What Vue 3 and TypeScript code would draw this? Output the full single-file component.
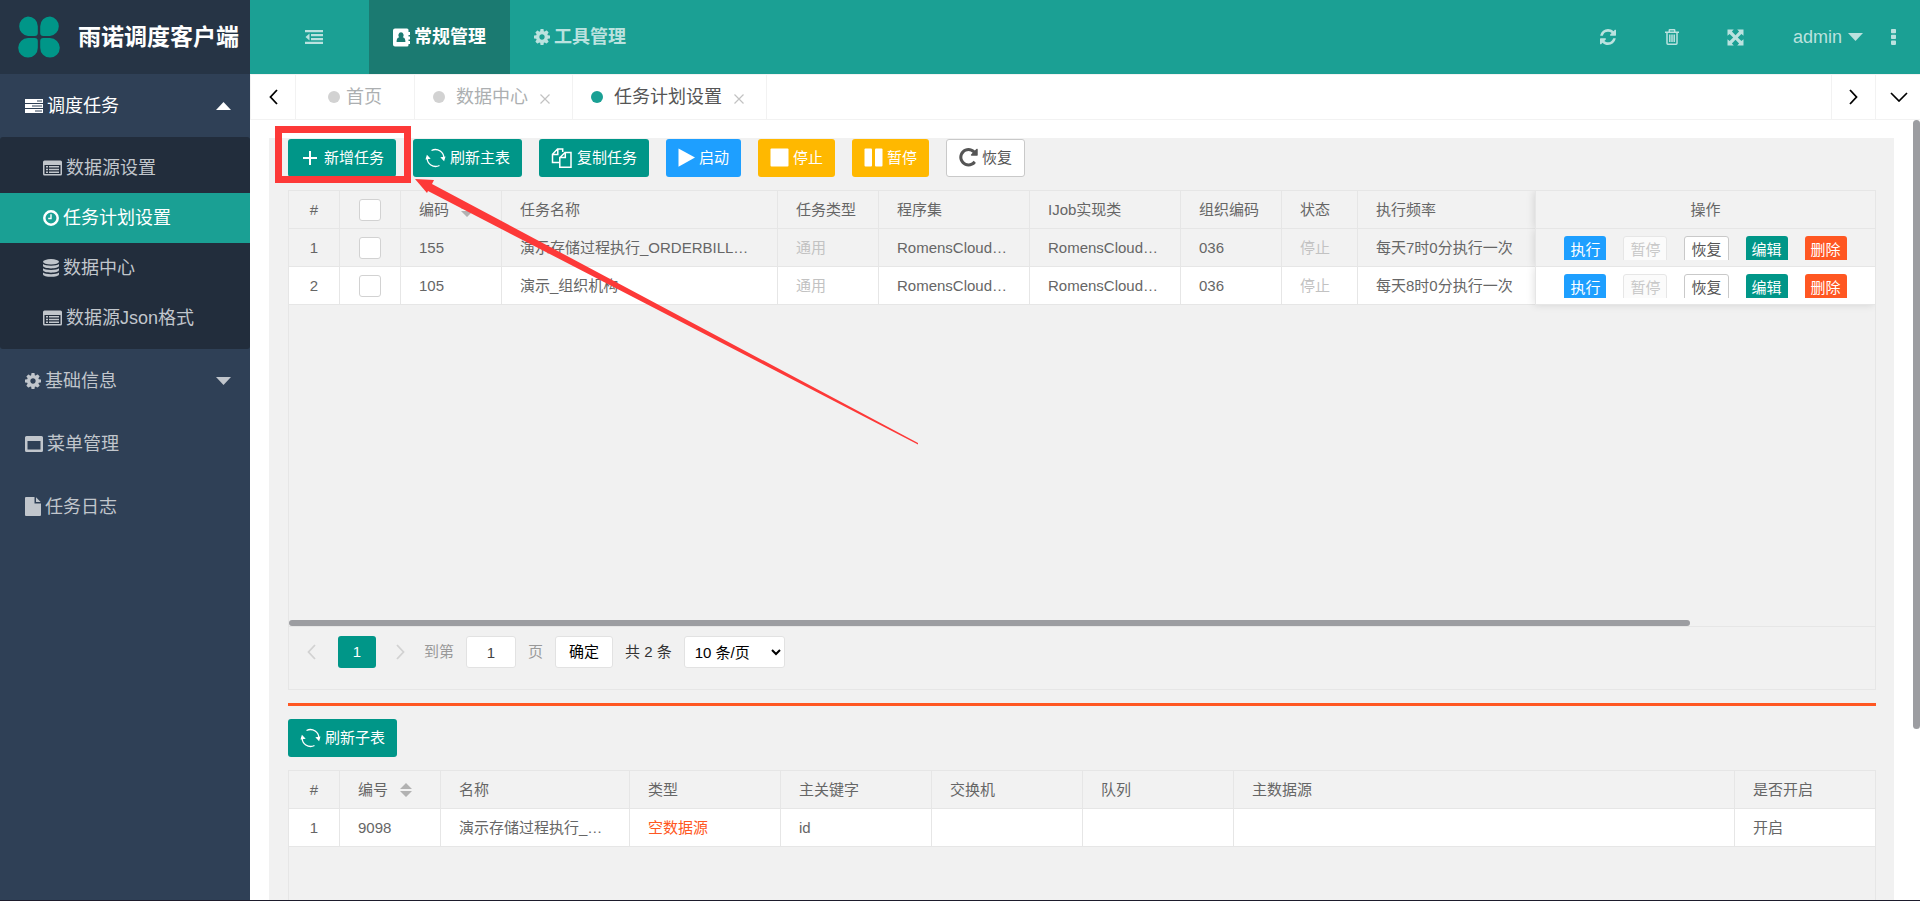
<script setup lang="ts">
import { h, ref } from 'vue'

interface Glyph { box: string; w: number; h: number; body: string }

const cog = '<path d="M1152 896q0-106-75-181t-181-75-181 75-75 181 75 181 181 75 181-75 75-181zm512-109v222q0 12-8 23t-20 13l-185 28q-19 54-39 91 35 50 107 138 10 12 10 25t-9 23q-27 37-99 108t-94 71q-12 0-26-9l-138-108q-44 23-91 38-16 136-29 186-7 28-36 28h-222q-14 0-24.5-8.5t-11.5-21.5l-28-184q-49-16-90-37l-141 107q-10 9-25 9-14 0-25-11-126-114-165-168-7-10-7-23 0-12 8-23 15-21 51-66.5t54-70.5q-27-50-41-99l-183-27q-13-2-21-12.5t-8-23.5v-222q0-12 8-23t19-13l186-28q14-46 39-92-40-57-107-138-10-12-10-24 0-10 9-23 26-36 98.5-107.5t94.5-71.5q13 0 26 10l138 107q44-23 91-38 16-136 29-186 7-28 36-28h222q14 0 24.5 8.5t11.5 21.5l28 184q49 16 90 37l142-107q9-9 24-9 13 0 25 10 129 119 165 170 7 8 7 22 0 12-8 23-15 21-51 66.5t-54 70.5q26 50 41 98l183 28q13 2 21 12.5t8 23.5z"/>'
const refreshArrows = '<path d="M1639 1056q0 5-1 7-64 268-268 434.5t-478 166.5q-146 0-282.5-55t-243.5-157l-129 129q-19 19-45 19t-45-19-19-45v-448q0-26 19-45t45-19h448q26 0 45 19t19 45-19 45l-137 137q71 66 161 102t187 36q134 0 250-65t186-179q11-17 53-117 8-23 30-23h192q13 0 22.5 9.5t9.5 22.5zm25-800v448q0 26-19 45t-45 19h-448q-26 0-45-19t-19-45 19-45l138-138q-148-137-349-137-134 0-250 65t-186 179q-11 17-53 117-8 23-30 23h-199q-13 0-22.5-9.5t-9.5-22.5v-7q65-268 270-434.5t480-166.5q146 0 284 55.5t245 156.5l130-129q19-19 45-19t45 19 19 45z"/>'
const repeatArrow = '<path d="M1664 256v448q0 26-19 45t-45 19h-448q-42 0-59-40-17-39 14-69l138-138q-148-137-349-137-104 0-198.5 40.5t-163.5 109.5-109.5 163.5-40.5 198.5 40.5 198.5 109.5 163.5 163.5 109.5 198.5 40.5q119 0 225-52t179-147q7-10 23-12 15 0 25 9l137 138q9 8 9.5 20.5t-7.5 22.5q-109 132-264 204.5t-327 72.5q-156 0-298-61t-245-164-164-245-61-298 61-298 164-245 245-164 298-61q147 0 284.5 55.5t244.5 156.5l130-129q29-31 70-14 39 17 39 59z"/>'

const glyphs: Record<string, Glyph> = {
  clover: { box: '0 0 42 42', w: 42, h: 42, body: '<path d="M10 0.5a9.8 9.8 0 0 1 9.8 9.8V17a3 3 0 0 1-3 3H10A9.8 9.8 0 0 1 10 .5zM32 .5A9.8 9.8 0 0 1 32 20h-6.800a3 3 0 0 1-3-3v-6.700A9.800 9.800 0 0 1 32 .5zM10 22h6.800a3 3 0 0 1 3 3v6.700A9.800 9.800 0 1 1 10 22zM25.200 22H32a9.800 9.800 0 1 1-9.800 9.700V25a3 3 0 0 1 3-3z"/>' },
  server: { box: '0 0 18 16', w: 18, h: 16, body: '<path fill-rule="evenodd" d="M0 1h18v4H0zM12 2.500v1h5v-1zM0 6h18v4H0zM7 7.500v1h10v-1zM0 11h18v4H0zM10 12.500v1h7v-1z"/>' },
  list: { box: '0 0 19 16', w: 19, h: 16, body: '<path fill-rule="evenodd" d="M1.500.5h16A1.500 1.500 0 0 1 19 2v12a1.500 1.500 0 0 1-1.500 1.500h-16A1.500 1.500 0 0 1 0 14V2A1.500 1.500 0 0 1 1.500.5zM1.500 5v9h16V5zM3 6h2v1.500H3zM6 6h10v1.500H6zM3 8.700h2v1.500H3zM6 8.700h10v1.500H6zM3 11.400h2v1.500H3zM6 11.400h10v1.500H6z"/>' },
  clock: { box: '0 0 16 16', w: 16, h: 16, body: '<circle cx="8" cy="8" r="6.700" fill="none" stroke="currentColor" stroke-width="2.500"/><path d="M8 4.200v4.300H5.200" fill="none" stroke="currentColor" stroke-width="1.400"/>' },
  database: { box: '0 0 16 18', w: 16, h: 18, body: '<ellipse cx="8" cy="2.800" rx="8" ry="2.700"/><path d="M0 5c2 2.200 14 2.200 16 0v1.800c0 3.500-16 3.500-16 0zM0 9.300c2 2.200 14 2.200 16 0v1.800c0 3.500-16 3.500-16 0zM0 13.500c2 2.200 14 2.200 16 0v1.700c0 3.500-16 3.500-16 0z"/>' },
  cog: { box: '128 128 1536 1536', w: 16, h: 16, body: cog },
  window: { box: '0 0 18 16', w: 18, h: 16, body: '<path fill-rule="evenodd" d="M1.500 0h15A1.500 1.500 0 0 1 18 1.500v13a1.500 1.500 0 0 1-1.500 1.500h-15A1.500 1.500 0 0 1 0 14.500v-13A1.500 1.500 0 0 1 1.500 0zM2.500 5v8.500h13V5z"/>' },
  file: { box: '0 0 16 19', w: 16, h: 19, body: '<path d="M1 0h8.500v6.500H16V18a1 1 0 0 1-1 1H1a1 1 0 0 1-1-1V1a1 1 0 0 1 1-1zM11 .3 15.700 5H11z"/>' },
  outdent: { box: '0 0 18 14', w: 18, h: 14, body: '<path d="M0 0h18v2.300H0zM6 4h12v2.200H6zM6 8h12v2.200H6zM0 11.800h18V14H0zM4.500 3.500v7L.5 7z"/>' },
  book: { box: '0 0 17 19', w: 17, h: 19, body: '<path fill-rule="evenodd" d="M2 .5h12A1.500 1.500 0 0 1 15.500 2v2H17v3h-1.500v1.500H17v3h-1.500V13H17v3h-1.500v1a1.500 1.500 0 0 1-1.500 1.500H2A2 2 0 0 1 0 16.500v-14A2 2 0 0 1 2 .5zM8 4.300a2.700 2.900 0 0 0-1.800 5C4.200 9.500 3.600 11.500 3.600 14h8.800c0-2.500-.6-4.500-2.600-4.700A2.700 2.900 0 0 0 8 4.300z"/>' },
  refresh: { box: '128 128 1536 1536', w: 16, h: 16, body: refreshArrows },
  trash: { box: '0 0 14 16', w: 14, h: 16, body: '<path fill="none" stroke="currentColor" stroke-width="1.500" d="M0 3.300h14M4.300 3V1.200q0-.4.4-.4h4.600q.4 0 .4.400V3M2 3.500v10.800q0 .9.900.9h8.200q.9 0 .9-.9V3.500M4.800 5.500v7.500M7 5.500v7.500M9.200 5.500v7.500"/>' },
  expand: { box: '0 0 17 17', w: 17, h: 17, body: '<path d="M.5.5h6.300L4.900 2.600l3.600 3.600 3.600-3.600L10.200.5h6.300v6.300l-2.100-1.900-3.600 3.600 3.600 3.600 2.100-1.900v6.300h-6.300l1.900-2.100-3.600-3.600-3.600 3.600 1.900 2.100H.5v-6.300l2.100 1.900 3.600-3.600-3.600-3.600L.5 6.800z"/>' },
  dots: { box: '0 0 5 16', w: 5, h: 16, body: '<path d="M.8 0h3.400q.8 0 .8.800v2.700q0 .8-.8.800H.8q-.8 0-.8-.8V.8Q0 0 .8 0zM.8 5.800h3.400q.8 0 .8.800v2.700q0 .8-.8.800H.8q-.8 0-.8-.8V6.600q0-.8.8-.8zM.8 11.600h3.400q.8 0 .8.800v2.700q0 .8-.8.800H.8q-.8 0-.8-.8v-2.700q0-.8.8-.8z"/>' },
  down: { box: '0 0 15 8', w: 15, h: 8, body: '<path d="M0 0h15L7.500 8z"/>' },
  up: { box: '0 0 15 8', w: 15, h: 8, body: '<path d="M0 8h15L7.500 0z"/>' },
  left: { box: '0 0 9 16', w: 9, h: 16, body: '<path d="M8 1 1.500 8 8 15" fill="none" stroke="currentColor" stroke-width="1.800"/>' },
  right: { box: '0 0 9 16', w: 9, h: 16, body: '<path d="m1 1 6.500 7L1 15" fill="none" stroke="currentColor" stroke-width="1.800"/>' },
  chevron: { box: '0 0 18 10', w: 18, h: 10, body: '<path d="m1 1 8 8 8-8" fill="none" stroke="currentColor" stroke-width="1.700"/>' },
  close: { box: '0 0 10 10', w: 10, h: 10, body: '<path d="m.5.5 9 9m0-9-9 9" fill="none" stroke="currentColor" stroke-width="1.200"/>' },
  plus: { box: '0 0 20 20', w: 20, h: 20, body: '<path d="M3 10h14M10 3v14" fill="none" stroke="currentColor" stroke-width="2"/>' },
  cycle: { box: '0 0 21 20', w: 21, h: 20, body: '<path d="M6.500 2.500A8.500 8.500 0 0 1 18.800 11M14.500 17.500A8.500 8.500 0 0 1 2.200 9" fill="none" stroke="currentColor" stroke-width="1.300"/><path d="m15.300 9.200 5.200-.6-1.400 4.600zM.5 11.400l1.400-4.600 3.800 4z"/>' },
  copy: { box: '0 0 22 22', w: 22, h: 22, body: '<path d="M8 15.500H1.500V7.200L6.500 2h5.200v3M6.800 2v5.500H1.500M9.500 10 14 5.500h6v14.700H8.800V10.500h5.500V5.500" fill="none" stroke="currentColor" stroke-width="1.500"/>' },
  play: { box: '0 0 17 20', w: 17, h: 20, body: '<path d="M.5.5 17 9.500.5 18.700z"/>' },
  stop: { box: '0 0 19 20', w: 19, h: 20, body: '<rect x=".5" y=".5" width="18" height="18" rx="1"/>' },
  pause: { box: '0 0 19 20', w: 19, h: 20, body: '<rect x=".5" y=".5" width="7.500" height="18" rx="1"/><rect x="11" y=".5" width="7.500" height="18" rx="1"/>' },
  repeat: { box: '128 128 1536 1664', w: 19, h: 20, body: repeatArrow },
}

const Ico = (props: { name: string }) => {
  const g = glyphs[props.name]
  return h('svg', { viewBox: g.box, width: g.w, height: g.h, fill: 'currentColor', 'aria-hidden': 'true', innerHTML: g.body })
}
Ico.props = ['name']

const submenu = [
  { icon: 'list', label: '数据源设置' },
  { icon: 'clock', label: '任务计划设置', active: true },
  { icon: 'database', label: '数据中心' },
  { icon: 'list', label: '数据源Json格式' },
]
const tabs = [
  { label: '首页', home: true },
  { label: '数据中心' },
  { label: '任务计划设置', active: true },
]
const tools = [
  { icon: 'plus', label: '新增任务', kind: 'green' },
  { icon: 'cycle', label: '刷新主表', kind: 'green' },
  { icon: 'copy', label: '复制任务', kind: 'green' },
  { icon: 'play', label: '启动', kind: 'blue' },
  { icon: 'stop', label: '停止', kind: 'amber' },
  { icon: 'pause', label: '暂停', kind: 'amber' },
  { icon: 'repeat', label: '恢复', kind: 'plain' },
]
const tasks = ref([
  { no: 1, code: '155', name: '演示存储过程执行_ORDERBILL…', type: '通用', asm: 'RomensCloud…', job: 'RomensCloud…', org: '036', state: '停止', freq: '每天7时0分执行一次', checked: false },
  { no: 2, code: '105', name: '演示_组织机构', type: '通用', asm: 'RomensCloud…', job: 'RomensCloud…', org: '036', state: '停止', freq: '每天8时0分执行一次', checked: false },
])
const all = ref(false)
const page = ref('1')
const size = ref('10')
</script>

<template>
  <div class="app">
    <aside class="side">
      <div class="brand"><Ico name="clover" class="logo" /><h1>雨诺调度客户端</h1></div>
      <nav>
        <a href="#" class="item open"><Ico name="server" /><span>调度任务</span><Ico name="up" class="fold" /></a>
        <div class="sub">
          <a v-for="m in submenu" :key="m.label" href="#" :class="{ active: m.active }"><Ico :name="m.icon" /><span>{{ m.label }}</span></a>
        </div>
        <a href="#" class="item"><Ico name="cog" /><span>基础信息</span><Ico name="down" class="fold" /></a>
        <a href="#" class="item"><Ico name="window" /><span>菜单管理</span></a>
        <a href="#" class="item"><Ico name="file" /><span>任务日志</span></a>
      </nav>
    </aside>

    <div class="main">
      <header class="top">
        <button class="toggle" aria-label="收起菜单"><Ico name="outdent" /></button>
        <a href="#" class="mod on"><Ico name="book" /><span>常规管理</span></a>
        <a href="#" class="mod"><Ico name="cog" /><span>工具管理</span></a>
        <div class="right">
          <button class="act" aria-label="刷新"><Ico name="refresh" /></button>
          <button class="act" aria-label="清理缓存"><Ico name="trash" /></button>
          <button class="act" aria-label="全屏"><Ico name="expand" /></button>
          <button class="user"><span>admin</span><Ico name="down" /></button>
          <button class="more" aria-label="更多"><Ico name="dots" /></button>
        </div>
      </header>

      <div class="tabs">
        <button class="step first" aria-label="向左"><Ico name="left" /></button>
        <div v-for="t in tabs" :key="t.label" class="tab" :class="{ on: t.active, home: t.home }">
          <i class="dot"></i><a href="#">{{ t.label }}</a>
          <button v-if="!t.home" class="shut" aria-label="关闭"><Ico name="close" /></button>
        </div>
        <button class="step next" aria-label="向右"><Ico name="right" /></button>
        <button class="step" aria-label="标签操作"><Ico name="chevron" /></button>
      </div>

      <div class="view">
        <main class="card">
          <div class="tools">
            <button v-for="b in tools" :key="b.label" class="btn" :class="b.kind"><Ico :name="b.icon" /><span>{{ b.label }}</span></button>
          </div>

          <section class="grid">
            <div class="body">
              <table class="master">
                <colgroup>
                  <col class="c51" /><col class="c61" /><col class="c101" /><col class="c276" /><col class="c101" /><col class="c151" />
                  <col class="c151" /><col class="c101" /><col class="c76" /><col /><col class="c340" />
                </colgroup>
                <thead>
                  <tr>
                    <th class="mid">#</th>
                    <th class="mid"><input v-model="all" type="checkbox" aria-label="全选" /></th>
                    <th><span class="sorter">编码<svg class="sort" viewBox="0 0 12 14" width="12" height="14"><path d="M0 6h12L6 0zM0 8h12l-6 6z" /></svg></span></th>
                    <th>任务名称</th><th>任务类型</th><th>程序集</th><th>IJob实现类</th><th>组织编码</th><th>状态</th><th>执行频率</th>
                    <th class="mid pin">操作</th>
                  </tr>
                </thead>
                <tbody>
                  <tr v-for="r in tasks" :key="r.no" :class="{ hover: r.no === 1 }">
                    <td class="mid">{{ r.no }}</td>
                    <td class="mid"><input v-model="r.checked" type="checkbox" :aria-label="r.name" /></td>
                    <td>{{ r.code }}</td><td>{{ r.name }}</td><td class="dim">{{ r.type }}</td><td>{{ r.asm }}</td><td>{{ r.job }}</td>
                    <td>{{ r.org }}</td><td class="dim">{{ r.state }}</td><td>{{ r.freq }}</td>
                    <td class="pin">
                      <div class="ops">
                        <button class="mini blue">执行</button>
                        <button class="mini off" disabled>暂停</button>
                        <button class="mini plain">恢复</button>
                        <button class="mini green">编辑</button>
                        <button class="mini red">删除</button>
                      </div>
                    </td>
                  </tr>
                </tbody>
              </table>
              <div class="hbar"></div>
            </div>
            <div class="pager">
              <button class="arrow" disabled aria-label="上一页"><Ico name="left" /></button>
              <button class="cur">1</button>
              <button class="arrow thin" disabled aria-label="下一页"><Ico name="right" /></button>
              <label for="page">到第</label>
              <input id="page" v-model="page" type="text" />
              <label for="page">页</label>
              <button class="go">确定</button>
              <span class="total">共 2 条</span>
              <select v-model="size" aria-label="每页条数"><option value="10">10 条/页</option><option value="20">20 条/页</option></select>
            </div>
          </section>

          <hr />

          <div class="tools"><button class="btn green"><Ico name="cycle" /><span>刷新子表</span></button></div>
          <section class="grid detail">
            <table>
              <colgroup>
                <col class="c51" /><col class="c101" /><col class="c189" /><col class="c151" /><col class="c151" /><col class="c151" /><col class="c151" /><col /><col class="c140" />
              </colgroup>
              <thead>
                <tr>
                  <th class="mid">#</th>
                  <th><span class="sorter">编号<svg class="sort" viewBox="0 0 12 14" width="12" height="14"><path d="M0 6h12L6 0zM0 8h12l-6 6z" /></svg></span></th>
                  <th>名称</th><th>类型</th><th>主关键字</th><th>交换机</th><th>队列</th><th>主数据源</th><th>是否开启</th>
                </tr>
              </thead>
              <tbody>
                <tr><td class="mid">1</td><td>9098</td><td>演示存储过程执行_…</td><td class="warn">空数据源</td><td>id</td><td></td><td></td><td></td><td>开启</td></tr>
              </tbody>
            </table>
          </section>

          <svg class="mark" viewBox="0 0 650 324" width="650" height="324" aria-hidden="true">
            <rect x="3.500" y="3.500" width="129" height="50" fill="none" stroke="#fd3938" stroke-width="7" />
            <path d="M140 53 159 54 157 58 643 317 643 318.500 153 65 152 67z" fill="#fd3938" />
          </svg>
        </main>
        <div class="vbar"></div>
      </div>
    </div>
    <div class="edge"></div>
  </div>
</template>

<style>
html, body { margin: 0; height: 100%; overflow: hidden; }
</style>

<style scoped>
* { box-sizing: border-box; }
.app { position: relative; display: flex; height: 100vh; overflow: hidden; background: #fff; font-family: "Liberation Sans", "Noto Sans CJK SC", sans-serif; font-size: 15px; line-height: 20px; color: #666; }
a { color: inherit; text-decoration: none; }
button, input, select { font: inherit; margin: 0; }
button { display: flex; align-items: center; justify-content: center; padding: 0; border: 0; background: none; color: inherit; white-space: nowrap; }
svg { flex: none; display: block; }
span { display: block; }

.side { flex: 0 0 250px; background: #2f4056; color: #c1c6cc; font-size: 18px; }
.brand { display: flex; align-items: center; height: 74px; padding-left: 18px; background: #263445; }
.logo { color: #009688; }
h1 { margin: 0 0 0 18px; font-size: 23px; line-height: 30px; font-weight: 700; color: #fff; white-space: nowrap; }
.side nav { display: flex; flex-direction: column; }
.item { display: flex; align-items: center; gap: 4px; height: 63px; padding: 0 19px 0 25px; }
.open { color: #fff; }
.fold { margin-left: auto; }
.sub { padding: 6px 0; background: #222d3c; border-radius: 3px; }
.sub a { display: flex; align-items: center; gap: 4px; height: 50px; padding-left: 43px; }
.sub .active { background: #1aa094; color: #fff; }

.main { flex: 1; min-width: 0; display: flex; flex-direction: column; }
.top { display: flex; flex: 0 0 74px; background: #1ba094; color: #bbe2df; font-size: 18px; }
.toggle { width: 119px; padding-left: 9px; }
.mod { display: flex; align-items: center; gap: 4px; padding: 0 24px; font-weight: 700; }
.on.mod { background: #1b7a71; color: #fff; }
.right { display: flex; margin-left: auto; }
.act { width: 64px; }
.user { gap: 6px; padding: 0 4px 0 25px; }
.more { width: 53px; }

.tabs { display: flex; flex: 0 0 46px; border: 1px solid #f2f2f2; border-right: 0; font-size: 18px; color: #acafb1; }
.step { width: 44px; border-left: 1px solid #f2f2f2; color: #000; }
.step:last-child { width: 45px; padding-left: 2px; }
.first { width: 45px; border-left: 0; border-right: 1px solid #f2f2f2; }
.next { margin-left: auto; }
.tab { display: flex; align-items: center; padding: 0 22px 0 18px; border-right: 1px solid #f2f2f2; }
.home { padding: 0 32px; }
.dot { width: 12px; height: 12px; margin-right: 11px; border-radius: 50%; background: #d2d2d2; }
.home .dot { margin-right: 6px; }
.shut { margin: 4px 0 0 12px; color: #c2c2c2; }
.tab.on { color: #555; }
.tab.on .dot { background: #1aa094; }

.view { position: relative; flex: 1; min-height: 0; padding: 18px 26px 0 19px; overflow: hidden; }
.vbar { position: absolute; right: 0; top: 0; width: 7px; height: 78%; border-radius: 4px; background: #9c9da1; }
.card { position: relative; min-height: 100%; padding: 1px 18px 0 19px; background: #f1f1f1; }
.tools { display: flex; gap: 17px; margin-bottom: 13px; }
.btn { gap: 4px; height: 38px; padding: 0 12px; border-radius: 3px; color: #fff; }
.green { background: #009688; }
.blue { background: #1e9fff; }
.amber { background: #ffb800; }
.red { background: #ff5722; }
.plain { border: 1px solid #c9c9c9; background: #fff; color: #555; }

.grid { border: 1px solid #e6e6e6; }
.body { display: flex; flex-direction: column; height: 435px; overflow: hidden; }
.hbar { width: calc(100% - 185px); height: 6px; margin-top: auto; border-radius: 4px; background: #9c9da1; }
table { width: 100%; table-layout: fixed; border-collapse: separate; border-spacing: 0; }
th, td { height: 38px; padding: 0 18px; border-right: 1px solid #e6e6e6; border-bottom: 1px solid #e6e6e6; font-weight: 400; text-align: left; white-space: nowrap; }
td { background: #fff; }
th, .hover td { background: #f2f2f2; }
th:last-child, td:last-child { border-right: 0; }
.mid { padding: 0; text-align: center; }
.dim { color: #c2c2c2; }
.warn { color: #ff5722; }
.master th:nth-last-child(2), .master td:nth-last-child(2) { border-right: 0; }
.pin { position: relative; padding: 0; border-left: 1px solid #e6e6e6; box-shadow: -1px 0 8px rgba(0, 0, 0, .12); clip-path: inset(0 0 0 -10px); }
tr:last-child > td.pin { clip-path: inset(0 0 -10px -10px); }
.c51 { width: 51px; } .c61 { width: 61px; } .c76 { width: 76px; } .c101 { width: 101px; } .c140 { width: 140px; }
.c151 { width: 151px; } .c189 { width: 189px; } .c276 { width: 276px; } .c340 { width: 340px; }
th input, td input { display: block; appearance: none; width: 22px; height: 22px; margin: 0 auto; border: 1px solid #d2d2d2; border-radius: 3px; background: #fff; }
th input:checked, td input:checked { background: #009688; }
.sorter { display: flex; align-items: center; gap: 12px; }
.sort { fill: #b2b2b2; }
.ops { display: flex; justify-content: center; align-items: flex-start; gap: 17px; height: 24px; overflow: hidden; }
.mini { height: 27px; padding: 1px 6px 0; border-radius: 3px; color: #fff; }
.mini.plain { color: #555; }
.mini.off { border: 1px solid #e6e6e6; background: #fbfbfb; color: #c9c9c9; }

.pager { display: flex; align-items: center; gap: 12px; padding: 9px 7px 21px; border-top: 1px solid #e6e6e6; color: #999; }
.arrow { width: 30px; height: 32px; color: #d2d2d2; }
.thin { width: 24px; }
.cur { width: 38px; height: 32px; border-radius: 3px; background: #009688; color: #fff; }
.pager input { width: 50px; height: 32px; border: 1px solid #e2e2e2; border-radius: 3px; padding: 0; text-align: center; color: #444; }
.go { width: 58px; height: 32px; border: 1px solid #e2e2e2; border-radius: 3px; background: #fff; color: #000; }
.total { color: #333; }
.pager select { width: 101px; height: 32px; padding: 0 3px 0 6px; border: 1px solid #e2e2e2; border-radius: 3px; background: #fff; color: #000; }
hr { height: 3px; margin: 13px 0; border: 0; background: #ff5722; }
.detail { min-height: 240px; }
.mark { position: absolute; left: 6px; top: -12px; pointer-events: none; }
.edge { position: absolute; left: 0; right: 0; bottom: 0; height: 1px; background: #1d1b2c; }
</style>
